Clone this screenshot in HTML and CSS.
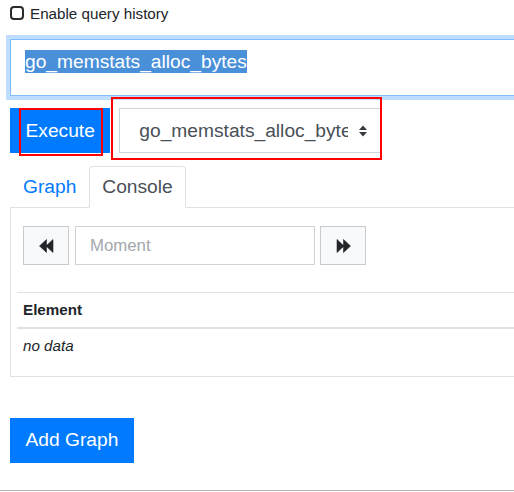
FILE: index.html
```html
<!DOCTYPE html>
<html>
<head>
<meta charset="utf-8">
<link rel="stylesheet" href="styles.css">
</head>
<body>
<div class="page">
  <label class="history">
    <span class="check"></span>
    <span>Enable query history</span>
  </label>
  <div class="expr"><span class="sel">go_memstats_alloc_bytes</span></div>
  <div class="exec-row">
    <button class="btn">Execute</button>
    <div class="select">
      <span class="select-text">go_memstats_alloc_bytes</span>
      <svg class="select-arrow" width="10" height="14" viewBox="0 0 10 14"><path d="M1 6 L5 1.5 L9 6 Z M1 8 L5 12.5 L9 8 Z" fill="#343a40"/></svg>
    </div>
  </div>
  <div class="tabs">
    <span class="tab">Graph</span>
    <span class="tab active">Console</span>
  </div>
  <div class="panel">
    <div class="controls">
      <span class="nav-btn">
        <svg width="15" height="14" viewBox="0 0 15 14"><path d="M0.5 7 L7.5 0.5 L7.5 13.5 Z M7 7 L14 0.5 L14 13.5 Z" fill="#212529" stroke="#212529" stroke-width="0.6" stroke-linejoin="round"/></svg>
      </span>
      <span class="moment">Moment</span>
      <span class="nav-btn">
        <svg width="15" height="14" viewBox="0 0 15 14"><path d="M14.5 7 L7.5 0.5 L7.5 13.5 Z M8 7 L1 0.5 L1 13.5 Z" fill="#212529" stroke="#212529" stroke-width="0.6" stroke-linejoin="round"/></svg>
      </span>
    </div>
    <table class="data">
      <thead><tr><th>Element</th></tr></thead>
      <tbody><tr><td class="empty">no data</td></tr></tbody>
    </table>
  </div>
  <button class="btn add">Add Graph</button>
  <div class="mark mark-exec"></div>
  <div class="mark mark-select"></div>
</div>
<div class="footer-line"></div>
</body>
</html>
```

FILE: styles.css
```css
html, body {
  margin: 0;
  overflow: hidden;
  background: #fff;
}
body {
  font-family: "Liberation Sans", Arial, sans-serif;
  font-size: 15.2px;
  color: #212529;
}
.page {
  position: relative;
  width: 640px;
  padding: 0 10px;
}
.history {
  display: flex;
  align-items: center;
  gap: 6px;
  height: 26px;
}
.check {
  display: block;
  flex: 0 0 14px;
  width: 14px;
  height: 14px;
  box-sizing: border-box;
  border: 2.5px solid #2b2b2b;
  border-radius: 4px;
}
.expr {
  margin-top: 13px;
  height: 57px;
  box-sizing: border-box;
  border: 1px solid #80bdff;
  box-shadow: 0 0 0 4px rgba(0, 123, 255, 0.25);
  padding: 10px 14px 0;
  font-size: 19.2px;
}
.sel {
  display: inline-block;
  line-height: 23px;
  background: #4a90d9;
  color: #fff;
}
.exec-row {
  display: flex;
  margin-top: 12px;
  height: 45px;
}
.btn {
  font-family: "Liberation Sans", Arial, sans-serif;
  font-size: 19.2px;
  color: #fff;
  background: #007bff;
  border: none;
  border-radius: 0;
  height: 45px;
  padding: 0 15.5px;
  margin: 0;
}
.select {
  margin-left: 9px;
  width: 262px;
  box-sizing: border-box;
  border: 1px solid #ced4da;
  display: flex;
  align-items: center;
  padding-left: 19px;
  font-size: 19.2px;
  color: #495057;
}
.select-text {
  width: 209px;
  overflow: hidden;
  white-space: nowrap;
}
.select-arrow {
  margin-left: 10px;
}
.tabs {
  display: flex;
  margin-top: 13px;
  height: 41px;
  font-size: 19.2px;
}
.tab {
  display: flex;
  align-items: center;
  padding: 0 12px;
  border: 1px solid transparent;
  color: #007bff;
}
.tab.active {
  position: relative;
  z-index: 1;
  color: #495057;
  background: #fff;
  border-color: #dee2e6 #dee2e6 #fff;
  border-radius: 4px 4px 0 0;
  height: 42px;
  box-sizing: border-box;
}
.panel {
  border: 1px solid #dee2e6;
  padding: 18px 0 12px 6px;
}
.controls {
  display: flex;
  margin-left: 6px;
  height: 39px;
}
.nav-btn {
  width: 46px;
  height: 39px;
  box-sizing: border-box;
  background: #f8f9fa;
  border: 1px solid #c8cacc;
  display: flex;
  align-items: center;
  justify-content: center;
}
.moment {
  margin: 0 5px 0 6px;
  width: 240px;
  height: 39px;
  box-sizing: border-box;
  border: 1px solid #ced4da;
  display: flex;
  align-items: center;
  padding-left: 14px;
  font-size: 16.8px;
  color: #a3a8ad;
}
.data {
  margin-top: 27px;
  width: 100%;
  border-collapse: collapse;
  line-height: 22.8px;
}
.data th {
  text-align: left;
  font-weight: bold;
  padding: 6px 6px 5px;
  border-top: 1px solid #dee2e6;
  border-bottom: 2px solid #dee2e6;
}
.data td {
  padding: 6px;
}
.empty {
  font-style: italic;
}
.add {
  margin-top: 41px;
  display: block;
}
.mark {
  position: absolute;
  box-sizing: border-box;
  border: 2px solid #f00;
  pointer-events: none;
}
.mark-exec {
  left: 19px;
  top: 108px;
  width: 84px;
  height: 48px;
}
.mark-select {
  left: 111px;
  top: 97px;
  width: 271px;
  height: 63px;
}
.footer-line {
  margin-top: 27px;
  border-top: 1px solid #b3b3b3;
}
```
